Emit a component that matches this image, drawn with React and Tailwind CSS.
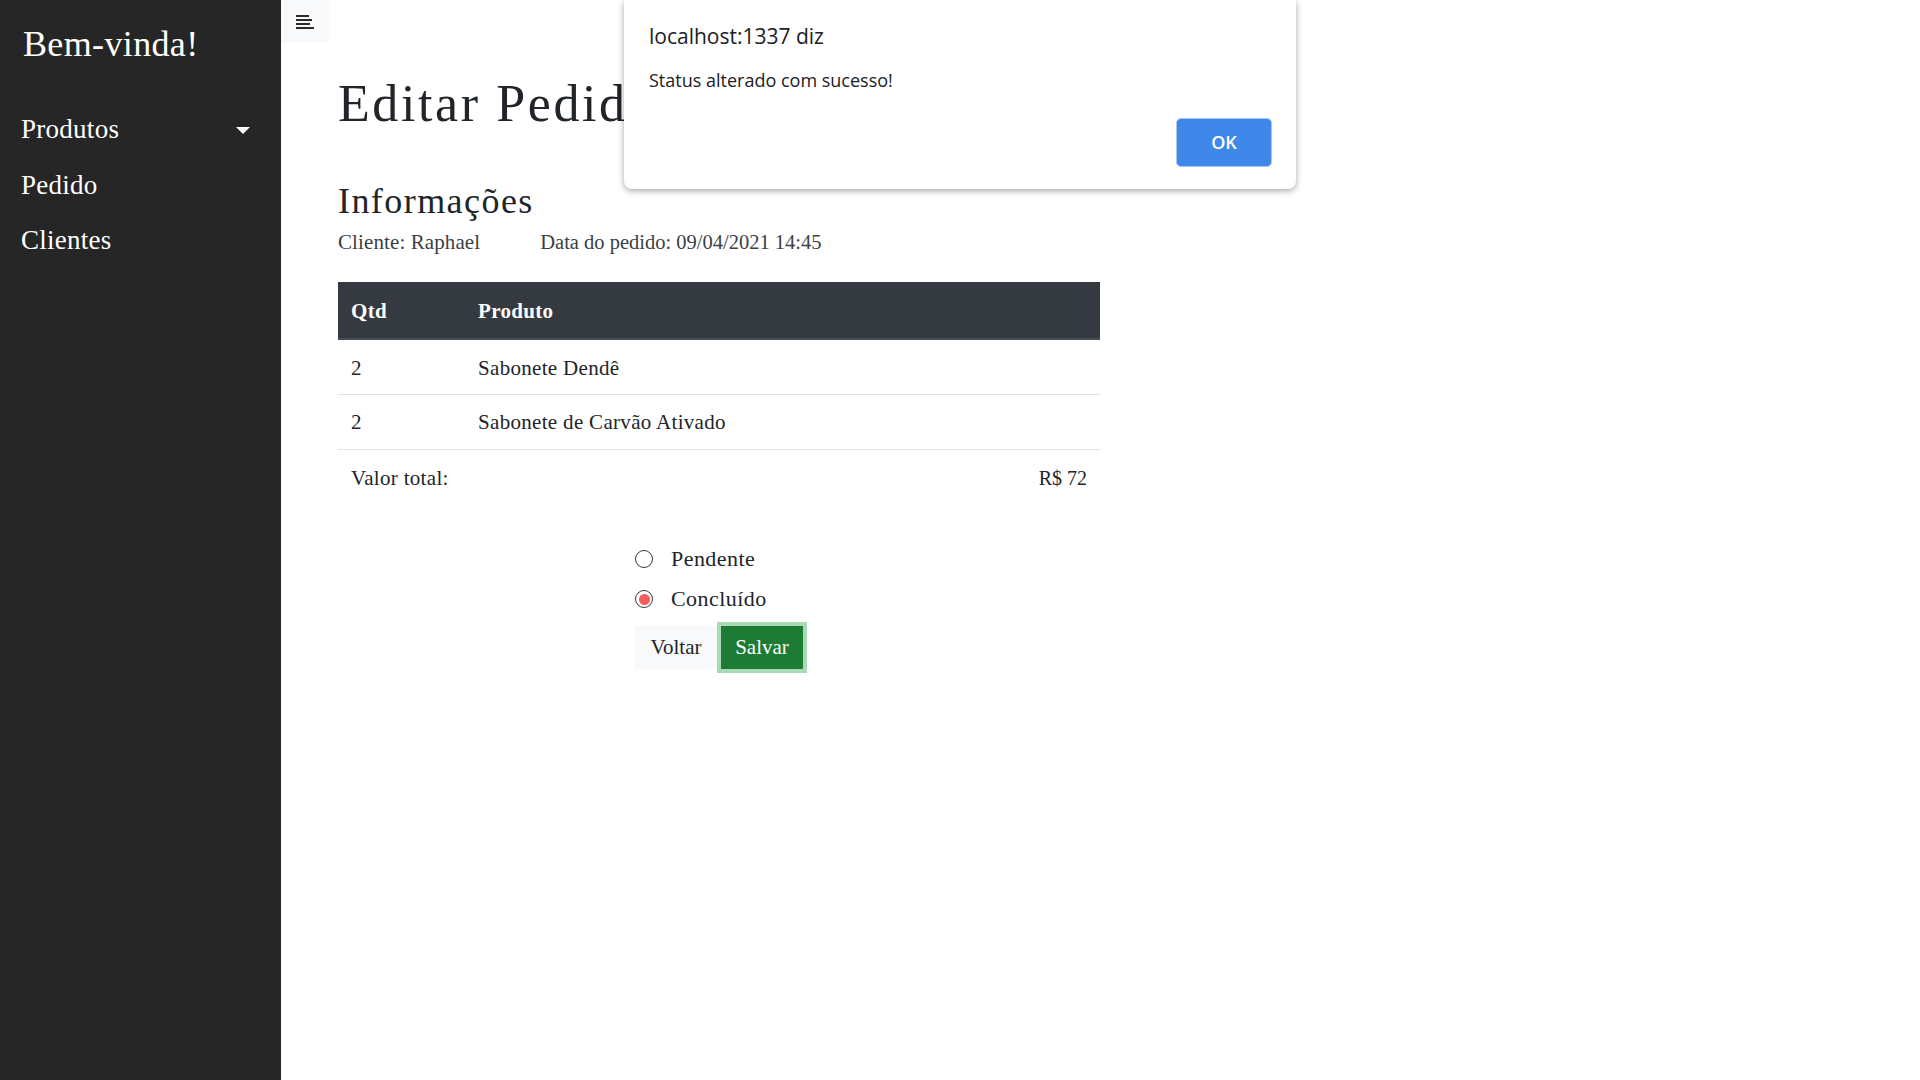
import React from "react";

function Radio({ checked, label, className = "" }) {
  return (
    <label className={"flex items-center h-[18px] " + className}>
      <span className="w-[18px] h-[18px] rounded-full border-[1.5px] border-[#3a3a3a] bg-white flex items-center justify-center">
        {checked && <span className="w-[11px] h-[11px] rounded-full bg-[#f45b5b]" />}
      </span>
      <span className="ml-[18px] text-[22px] leading-[18px] tracking-[0.02em] text-[#212529]">{label}</span>
    </label>
  );
}

export default function App() {
  return (
    <div className="flex w-full h-screen bg-white overflow-hidden font-['Liberation_Serif',serif] text-[#212529]">
      {/* Sidebar */}
      <aside className="w-[281px] shrink-0 h-full bg-[#262626] text-white">
        <div className="pl-[23px] pt-[22px] text-[36px] leading-[44px] tracking-[0.01em]">Bem-vinda!</div>
        <nav className="mt-[36px]">
          <div className="flex items-center justify-between pl-[21px] pr-[31px] text-[27px] leading-[55px] tracking-[0.01em]">
            <span>Produtos</span>
            <span className="w-0 h-0 border-l-[7px] border-r-[7px] border-t-[7px] border-l-transparent border-r-transparent border-t-white mt-[2px]" />
          </div>
          <div className="pl-[21px] pt-[1px] text-[27px] leading-[55px] tracking-[0.01em]">Pedido</div>
          <div className="pl-[21px] text-[27px] leading-[55px] tracking-[0.01em]">Clientes</div>
        </nav>
      </aside>

      {/* Main */}
      <main className="relative flex-1 h-full">
        <div className="w-[48px] h-[43px] bg-[#f8f9fa] flex flex-col items-start justify-center gap-[2px] pl-[15px]">
          <span className="block w-[13px] h-[2px] bg-[#2b2b2b]" />
          <span className="block w-[16px] h-[2px] bg-[#2b2b2b]" />
          <span className="block w-[14px] h-[2px] bg-[#2b2b2b]" />
          <span className="block w-[18px] h-[2px] bg-[#2b2b2b]" />
        </div>

        <div className="pl-[57px] w-[819px]">
          <h1 className="mt-[31px] text-[52px] leading-[60px] tracking-[0.05em] text-[#212529] whitespace-nowrap">Editar Pedido</h1>
          <h3 className="mt-[46px] text-[36px] leading-[42px] tracking-[0.04em]">Informações</h3>
          <div className="mt-[7px] flex items-baseline leading-[26px] text-[#3b3f44]">
            <span className="text-[21px] tracking-[0.005em]">Cliente: Raphael</span>
            <span className="ml-[60px] text-[20.5px]">Data do pedido: 09/04/2021 14:45</span>
          </div>

          <table className="mt-[27px] w-[762px] border-collapse text-[21px] tracking-[0.015em]">
            <thead>
              <tr className="bg-[#343a40] text-white h-[57px]">
                <th className="w-[127px] text-left font-bold px-[13px] pt-[3px] border-b-2 border-[#454d55]">Qtd</th>
                <th className="text-left font-bold px-[13px] pt-[3px] border-b-2 border-[#454d55]">Produto</th>
              </tr>
            </thead>
            <tbody>
              <tr className="h-[55px] border-b border-[#dee2e6]">
                <td className="px-[13px] pt-[3px]">2</td>
                <td className="px-[13px] pt-[3px]">Sabonete Dendê</td>
              </tr>
              <tr className="h-[55px] border-b border-[#dee2e6]">
                <td className="px-[13px] pt-[3px]">2</td>
                <td className="px-[13px] pt-[3px]">Sabonete de Carvão Ativado</td>
              </tr>
              <tr className="h-[55px]">
                <td className="px-[13px] pt-[3px]">Valor total:</td>
                <td className="px-[13px] pt-[3px] text-right tracking-normal text-[20px]">R$ 72</td>
              </tr>
            </tbody>
          </table>

          <div className="ml-[297px] mt-[46px]">
            <Radio label="Pendente" />
            <Radio checked label="Concluído" className="mt-[22px]" />
            <div className="flex items-center mt-[14px]">
              <button className="w-[82px] h-[43px] bg-[#f8f9fa] text-[21px] text-[#212529]">Voltar</button>
              <button className="w-[90px] h-[51px] bg-[#a9dab6] flex items-center justify-center">
                <span className="w-[82px] h-[43px] bg-[#1e7b34] text-white text-[21px] flex items-center justify-center">Salvar</span>
              </button>
            </div>
          </div>
        </div>

        {/* Alert dialog */}
        <div className="absolute left-[343px] top-0 w-[672px] h-[189px] bg-white rounded-b-[8px] shadow-[0_2px_6px_rgba(0,0,0,0.35)] font-['Open_Sans',sans-serif]">
          <div className="pl-[25px] pt-[22px] text-[21px] leading-[28px] text-[#202124]">localhost:1337 diz</div>
          <div className="pl-[25px] mt-[18px] text-[18px] leading-[24px] text-[#202124]">Status alterado com sucesso!</div>
          <button className="absolute left-[552px] top-[118px] w-[96px] h-[49px] rounded-[5px] bg-[#3f87e8] border border-[#a8c7f2] text-white text-[18px] font-semibold">OK</button>
        </div>
      </main>
    </div>
  );
}
